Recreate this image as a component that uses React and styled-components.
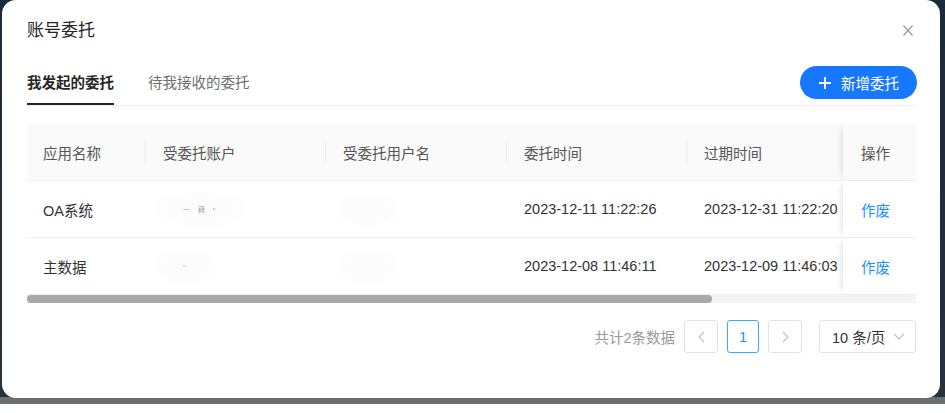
import React from 'react'
import styled, { createGlobalStyle } from 'styled-components'

const GlobalStyle = createGlobalStyle`
    html, body {
        margin: 0;
        padding: 0;
        background: #fff;
    }
    body {
        font-family: "Liberation Sans", "Noto Sans CJK SC", sans-serif;
        -webkit-font-smoothing: antialiased;
    }
`

const Backdrop = styled.div`
    height: 404px;
    padding: 0 5px 0 2px;
    background: linear-gradient(to bottom, #1b2a39 0, #26323c 397px, #6b6f71 397px);
`

const Modal = styled.div`
    width: 938px;
    height: 398px;
    box-sizing: border-box;
    padding: 0 24px 0 25px;
    background: #fff;
    border-radius: 14px;
    display: flex;
    flex-direction: column;
`

const Header = styled.div`
    height: 60px;
    display: flex;
    align-items: center;
    justify-content: space-between;
`

const Title = styled.div`
    font-size: 17px;
    line-height: 1;
    color: #262626;
`

const Close = styled.button`
    border: 0;
    background: none;
    padding: 0;
    margin-right: 3px;
    width: 10px;
    height: 11px;
    display: flex;
`

const TabBar = styled.div`
    height: 45px;
    display: flex;
    justify-content: space-between;
    align-items: center;
    border-bottom: 1px solid #f0f0f0;
`

const Tabs = styled.div`
    display: flex;
    gap: 34px;
    height: 100%;
`

const Tab = styled.div`
    display: flex;
    align-items: center;
    font-size: 14.5px;
    line-height: 1;
    color: ${props => props.active ? '#262626' : '#707070'};
    font-weight: ${props => props.active ? 700 : 400};
    box-shadow: ${props => props.active ? 'inset 0 -2px 0 #262626' : 'none'};
    padding-top: 1px;
`

const AddButton = styled.button`
    height: 33px;
    padding: 0 18px 0 19px;
    border: 0;
    border-radius: 17px;
    background: #1677ff;
    color: #fff;
    display: flex;
    align-items: center;
    gap: 10px;
    font-family: inherit;
    font-size: 14.5px;
    margin-right: -1px;
`

const Table = styled.div`
    margin-top: 18px;
    overflow: hidden;
`

const Row = styled.div`
    display: grid;
    grid-template-columns: 119px 180px 181px 180px 156px 73px;
    height: 57px;
    background: ${props => props.head ? '#fafafa' : '#fff'};
    border-bottom: 1px solid #f0f0f0;
    box-sizing: border-box;
`

const Cell = styled.div`
    position: relative;
    display: flex;
    align-items: center;
    padding: 0 0 0 17px;
    font-size: 14.5px;
    color: ${props => props.head ? '#555' : '#333'};
    white-space: nowrap;
    overflow: hidden;
    background: inherit;

    &:first-child {
        padding-left: 16px;
    }

    ${props => props.divider && `
        &::after {
            content: '';
            position: absolute;
            right: 0;
            top: 17px;
            width: 1px;
            height: 22px;
            background: #ececec;
        }
    `}
`

const FixedCell = styled(Cell)`
    overflow: visible;
    z-index: 1;
    box-shadow: -5px 0 6px -4px rgba(0, 0, 0, 0.14);
    padding-left: 18px;
`

const Action = styled.a`
    color: #1890ff;
    cursor: pointer;
`

const Smudge = styled.span`
    display: inline-block;
    padding: 16px 32px;
    margin-left: ${props => props.offset || 0}px;
    border-radius: 50%;
    background: radial-gradient(ellipse at center, #fbfbfb 0, #fdfdfd 55%, #fff 75%);
    font-size: 7px;
    color: #a8a8a8;
    letter-spacing: 3px;
    filter: blur(0.3px);
`

const ScrollTrack = styled.div`
    height: 8px;
    background: #f4f4f4;
`

const ScrollThumb = styled.div`
    width: 685px;
    height: 100%;
    border-radius: 4px;
    background: #a8a8a8;
`

const Pager = styled.div`
    margin-top: 17px;
    display: flex;
    justify-content: flex-end;
    align-items: center;
    gap: 9px;
`

const Total = styled.span`
    font-size: 14.5px;
    color: #9a9a9a;
`

const PageBox = styled.div`
    width: ${props => props.w || 34}px;
    height: 33px;
    box-sizing: border-box;
    border: 1px solid ${props => props.active ? '#40a9ff' : '#e3e3e3'};
    border-radius: 3px;
    display: flex;
    align-items: center;
    justify-content: center;
    color: ${props => props.active ? '#1890ff' : '#bfbfbf'};
    font-size: 14.5px;
`

const SizeSelect = styled.div`
    margin-left: 8px;
    width: 97px;
    height: 33px;
    box-sizing: border-box;
    border: 1px solid #e3e3e3;
    border-radius: 3px;
    display: flex;
    align-items: center;
    justify-content: space-between;
    padding: 0 10px 0 12px;
    font-size: 14.5px;
    color: #333;
`

const columns = ['应用名称', '受委托账户', '受委托用户名', '委托时间', '过期时间']

const rows = [
    { app: 'OA系统', mark: '一  藉 ᵖ', start: '2023-12-11 11:22:26', end: '2023-12-31 11:22:20' },
    { app: '主数据', mark: 'ᵘ', start: '2023-12-08 11:46:11', end: '2023-12-09 11:46:03' },
]

function Chevron({ dir }) {
    const d = dir === 'left' ? 'M7 1 L2 6 L7 11' : dir === 'right' ? 'M2 1 L7 6 L2 11' : 'M1 2 L6 7 L11 2'
    const size = dir === 'down' ? [12, 9] : [9, 12]
    return (
        <svg width={size[0]} height={size[1]} viewBox={`0 0 ${size[0]} ${size[1]}`} fill="none">
            <path d={d} stroke="#c2c2c2" strokeWidth="1.2" />
        </svg>
    )
}

export default function App() {
    return (
        <>
            <GlobalStyle />
            <Backdrop>
                <Modal>
                    <Header>
                        <Title>账号委托</Title>
                        <Close>
                            <svg width="10" height="11" viewBox="0 0 10 11">
                                <path d="M0.5 0.5 L9.5 10.5 M9.5 0.5 L0.5 10.5" stroke="#9a9a9a" strokeWidth="1.2" />
                            </svg>
                        </Close>
                    </Header>
                    <TabBar>
                        <Tabs>
                            <Tab active>我发起的委托</Tab>
                            <Tab>待我接收的委托</Tab>
                        </Tabs>
                        <AddButton>
                            <svg width="12" height="12" viewBox="0 0 12 12">
                                <path d="M6 0 V12 M0 6 H12" stroke="#fff" strokeWidth="2" />
                            </svg>
                            新增委托
                        </AddButton>
                    </TabBar>
                    <Table>
                        <Row head>
                            {columns.map((c, i) => (
                                <Cell head key={c} divider={i < 4}>{c}</Cell>
                            ))}
                            <FixedCell head>操作</FixedCell>
                        </Row>
                        {rows.map(r => (
                            <Row key={r.app}>
                                <Cell>{r.app}</Cell>
                                <Cell><Smudge offset={-12}>{r.mark}</Smudge></Cell>
                                <Cell><Smudge offset={-10}>&nbsp;</Smudge></Cell>
                                <Cell>{r.start}</Cell>
                                <Cell>{r.end}</Cell>
                                <FixedCell><Action>作废</Action></FixedCell>
                            </Row>
                        ))}
                        <ScrollTrack>
                            <ScrollThumb />
                        </ScrollTrack>
                    </Table>
                    <Pager>
                        <Total>共计2条数据</Total>
                        <PageBox><Chevron dir="left" /></PageBox>
                        <PageBox active w={32}>1</PageBox>
                        <PageBox><Chevron dir="right" /></PageBox>
                        <SizeSelect>
                            10 条/页
                            <Chevron dir="down" />
                        </SizeSelect>
                    </Pager>
                </Modal>
            </Backdrop>
        </>
    )
}
